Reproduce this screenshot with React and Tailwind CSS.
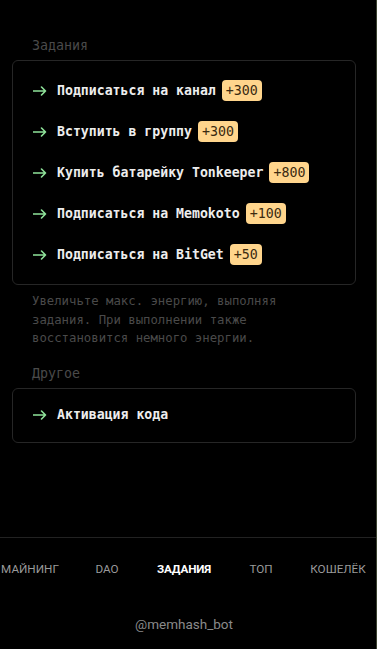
import React from "react";

const tasks = [
  { title: "Подписаться на канал", reward: "+300" },
  { title: "Вступить в группу", reward: "+300" },
  { title: "Купить батарейку Tonkeeper", reward: "+800" },
  { title: "Подписаться на Memokoto", reward: "+100" },
  { title: "Подписаться на BitGet", reward: "+50" },
];

const tabs = ["МАЙНИНГ", "DAO", "ЗАДАНИЯ", "ТОП", "КОШЕЛЁК"];

const mono = { fontFamily: '"DejaVu Sans Mono", "Liberation Mono", monospace' };

const Arrow = () => (
  <svg width="14" height="10" viewBox="0 0 14 10" fill="none" className="shrink-0">
    <path d="M0.5 5H12.5M8.5 1L12.5 5L8.5 9" stroke="#8fe39a" strokeWidth="1.6" strokeLinecap="round" strokeLinejoin="round" />
  </svg>
);

const TaskRow = ({ title, reward }) => (
  <div className="flex items-center h-[41px]">
    <Arrow />
    <span className="ml-[10px] text-[13.2px] font-bold text-[#ededed] whitespace-nowrap">{title}</span>
    {reward && (
      <span className="ml-[6px] px-[4px] h-[21px] leading-[21px] rounded-[4px] bg-[#ffd58c] text-[#3a2a10] text-[13.3px]">
        {reward}
      </span>
    )}
  </div>
);

export default function App() {
  return (
    <div className="w-[377px] h-[649px] bg-black flex flex-col overflow-hidden border-r border-[#3b4230]">
      <div className="w-[368px] flex flex-col" style={mono}>
        <div className="pt-[37px] pl-[32px] text-[13.3px] leading-[18px] text-[#4a4a4a]">Задания</div>
        <div className="mt-[5px] mx-3 rounded-md border border-[#262626] px-[20px] py-[9px]">
          {tasks.map((t) => (
            <TaskRow key={t.title} {...t} />
          ))}
        </div>
        <p className="mt-[7px] ml-[32px] w-[275px] text-[12.3px] leading-[18.5px] text-[#4a4a4a]">
          Увеличьте макс. энергию, выполняя задания. При выполнении также восстановится немного энергии.
        </p>
        <div className="mt-[17px] pl-[32px] text-[13.3px] leading-[18px] text-[#4a4a4a]">Другое</div>
        <div className="mt-[5px] mx-3 rounded-md border border-[#262626] px-[20px] py-[6px]">
          <TaskRow title="Активация кода" />
        </div>
      </div>

      <div className="mt-auto border-t border-[#222] -mr-px">
        <div className="w-[368px] h-[64px] flex justify-center items-center">
          <div className="grid grid-cols-[repeat(5,77px)] shrink-0" style={{ fontFamily: 'Roboto, "Noto Sans", sans-serif' }}>
            {tabs.map((t) => (
              <div
                key={t}
                className={
                  t === "ЗАДАНИЯ"
                    ? "text-center text-[11.7px] font-bold text-white tracking-[-0.2px]"
                    : "text-center text-[11.7px] text-[#9a9a9a]"
                }
              >
                {t}
              </div>
            ))}
          </div>
        </div>
        <div className="w-[368px] h-[47px] flex items-start justify-center pt-[12px] text-[13.5px] text-[#8a8a8a]" style={{ fontFamily: 'Roboto, "Noto Sans", sans-serif' }}>
          @memhash_bot
        </div>
      </div>
    </div>
  );
}
